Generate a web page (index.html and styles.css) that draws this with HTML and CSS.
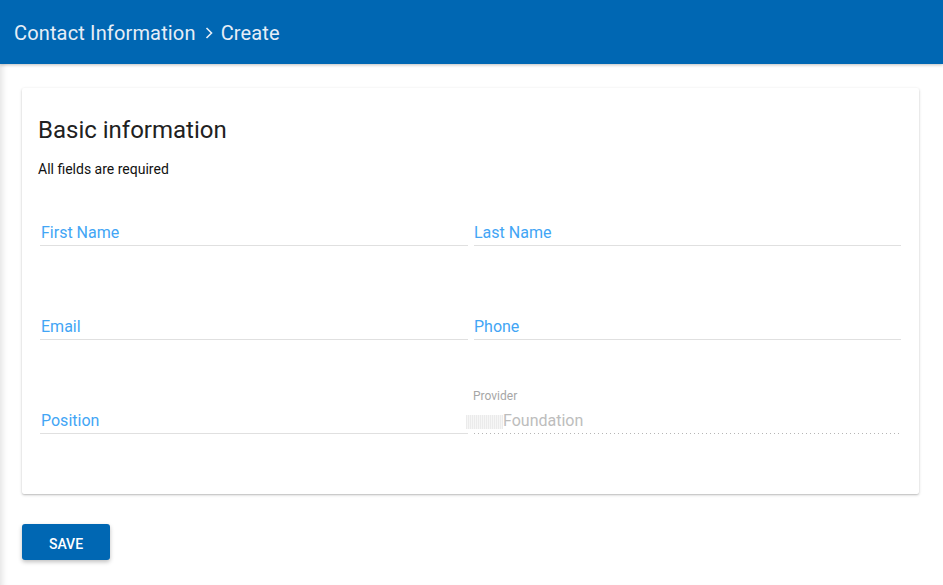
FILE: index.html
```html
<!DOCTYPE html>
<html>
<head>
<meta charset="utf-8">
<link rel="stylesheet" href="styles.css">
</head>
<body>
<div class="page">
  <header class="topbar">
    <span class="crumb">Contact Information</span>
    <svg class="chev" width="14" height="14" viewBox="0 0 14 14"><path d="M4.5 2 L9.5 7 L4.5 12" fill="none" stroke="currentColor" stroke-width="1.6"/></svg>
    <span class="crumb">Create</span>
  </header>
  <main class="content">
    <section class="card">
      <h2 class="title">Basic information</h2>
      <p class="note">All fields are required</p>
      <div class="grid">
        <div class="field"><span class="label">First Name</span></div>
        <div class="field"><span class="label right">Last Name</span></div>
        <div class="field"><span class="label">Email</span></div>
        <div class="field"><span class="label right">Phone</span></div>
        <div class="field"><span class="label">Position</span></div>
        <div class="field disabled">
          <span class="small">Provider</span>
          <span class="value"><span class="redact"></span>Foundation</span>
        </div>
      </div>
    </section>
    <button class="save">SAVE</button>
  </main>
</div>
</body>
</html>
```
FILE: styles.css
```css
html, body { margin: 0; padding: 0; background: #fff; }
body { font-family: Roboto, "Liberation Sans", sans-serif; }
.page {
  min-height: 585px;
  box-shadow: inset 7px 0 6px -5px rgba(0,0,0,0.12);
}
.topbar {
  height: 64px;
  box-sizing: border-box;
  background: #0067b3;
  color: #e6eef7;
  display: flex;
  align-items: center;
  padding: 2px 0 0 14px;
  font-size: 20px;
  letter-spacing: 0.15px;
  box-shadow: 0 1px 3px rgba(0,0,0,0.25);
  position: relative;
}
.chev { margin: 0 5px 0 6px; color: #e6eef7; }
.content { padding: 24px 24px 0 22px; }
.card {
  background: #fff;
  border-radius: 2px;
  box-shadow: 0 1px 3px rgba(0,0,0,0.22), 0 1px 1px rgba(0,0,0,0.08);
  padding: 26px 16px 60px 16px;
}
.title {
  margin: 0;
  font-size: 24px;
  font-weight: 400;
  line-height: 32px;
  color: #212121;
}
.note {
  margin: 13px 0 0 0;
  font-size: 14px;
  line-height: 20px;
  color: #111;
}
.grid {
  margin-top: 19px;
  display: grid;
  grid-template-columns: 428px 427px;
  column-gap: 6px;
  row-gap: 46px;
  padding: 0 2px;
}
.field {
  height: 48px;
  box-sizing: border-box;
  padding-top: 25px;
  border-bottom: 1px solid #e0e0e0;
  display: flex;
  flex-direction: column;
}
.label {
  display: block;
  font-size: 16px;
  line-height: 20px;
  color: #42a5f5;
  padding-left: 1px;
}
.label.right { padding-left: 0; }
.field.disabled {
  padding-top: 3px;
  border-bottom: none;
  background-image: linear-gradient(to right, #b5b5b5 0, #b5b5b5 1px, transparent 1px);
  background-size: 4px 1px;
  background-repeat: repeat-x;
  background-position: 0 bottom;
  margin-right: 1px;
}
.small {
  font-size: 12px;
  line-height: 14px;
  color: #a6a6a6;
  margin-bottom: 8px;
  margin-left: -1px;
}
.value {
  display: flex;
  align-items: center;
  font-size: 16px;
  line-height: 20px;
  color: #bdbdbd;
  margin-left: -8px;
}
.redact {
  display: inline-block;
  width: 37px;
  height: 14px;
  margin-top: 1px;
  background: repeating-linear-gradient(to right, #ebebeb 0, #ebebeb 1px, #f6f6f6 1px, #f6f6f6 2px);
}
.save {
  margin-top: 30px;
  width: 88px;
  height: 36px;
  border: none;
  border-radius: 3px;
  background: #0067b3;
  color: #fff;
  font-family: Roboto, "Liberation Sans", sans-serif;
  font-size: 14px;
  font-weight: 500;
  box-shadow: 0 2px 4px rgba(0,0,0,0.25);
  padding: 3px 0 0 0;
}
```
